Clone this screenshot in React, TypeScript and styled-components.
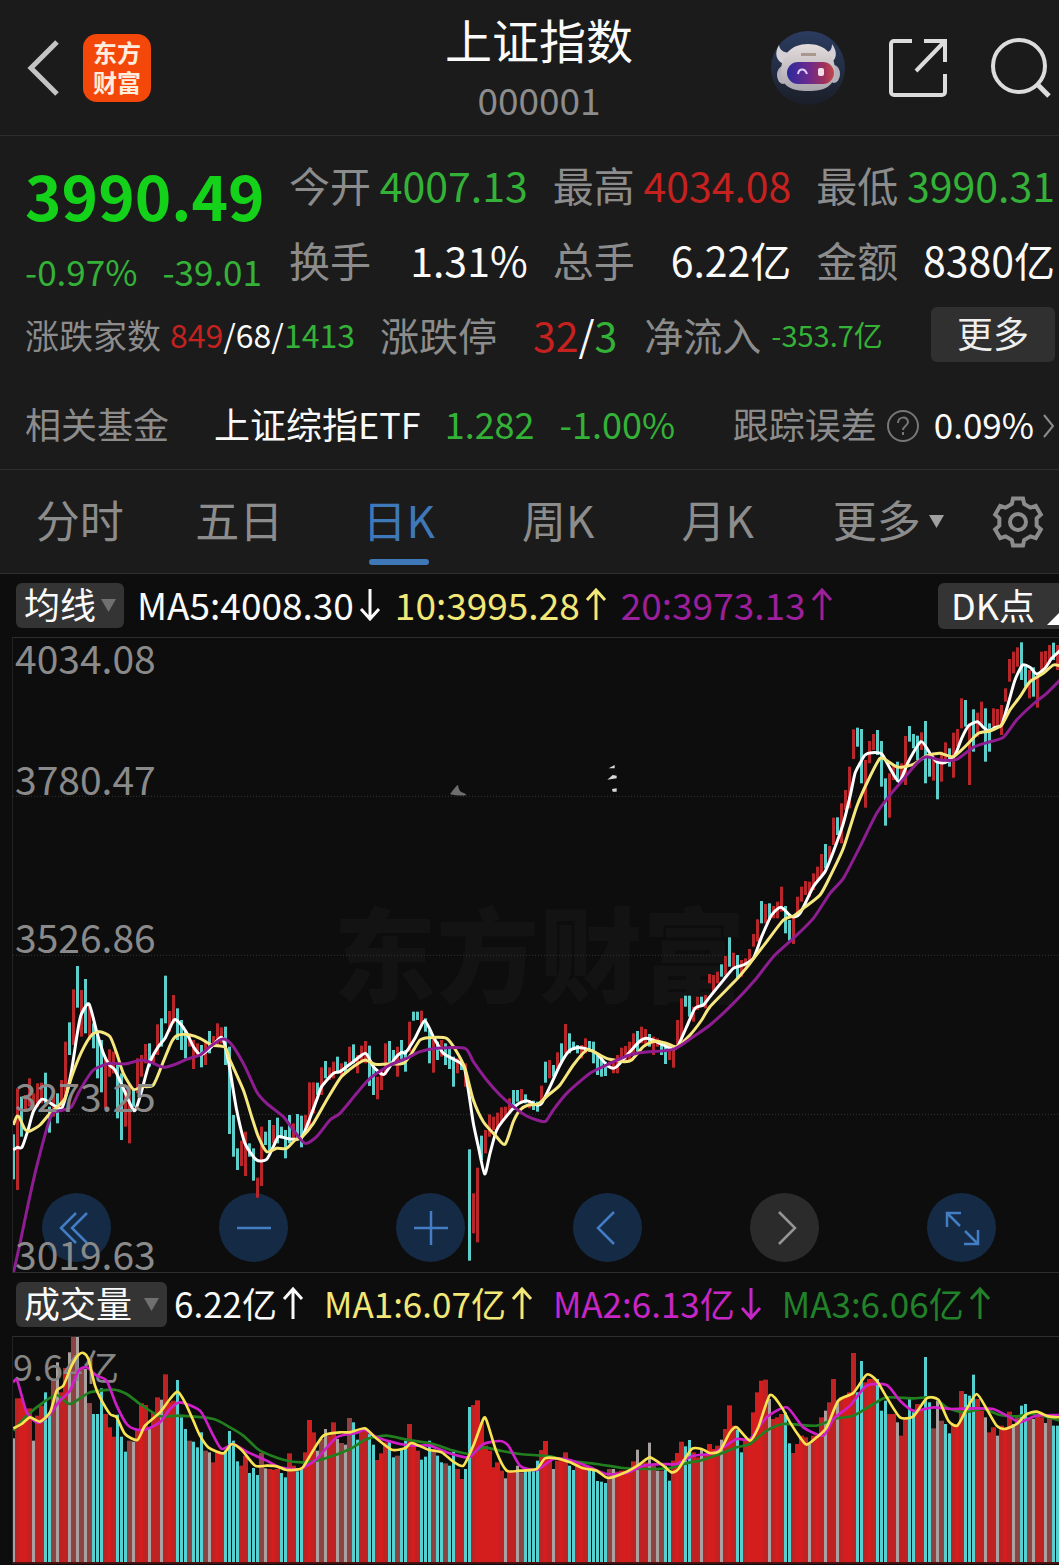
import React from "react";
import styled, { createGlobalStyle } from "styled-components";

const c = {
  panel: "#1b1b1b",
  chart: "#0d0d0d",
  line: "#2e2e2e",
  muted: "#8c8c8c",
  white: "#fafafa",
  green: "#34b238",
  bright: "#14d219",
  red: "#c4211f",
  blue: "#3f78b8",
  yellow: "#f2e877",
  purple: "#9c1f9c",
  magenta: "#c626c6",
  forest: "#22822a",
  cyan: "#5ccfca",
};

const GlobalStyle = createGlobalStyle`
  *, *::before, *::after { box-sizing: border-box; }
  body {
    margin: 0;
    background: ${c.chart};
    color: ${c.white};
    font-family: "Noto Sans CJK SC", "Noto Sans", sans-serif;
  }
  button {
    font: inherit;
    color: inherit;
    background: none;
    border: 0;
    padding: 0;
    cursor: pointer;
  }
  a { color: inherit; text-decoration: none; }
  h1, p, dl, dd, dt { margin: 0; font-weight: 400; }
  svg { display: block; }
`;

/* ---------- layout ---------- */

const Page = styled.main`
  overflow: hidden;
`;

const Header = styled.header`
  display: grid;
  grid-template-columns: 1fr auto 1fr;
  align-items: center;
  height: 136px;
  padding: 0 8px 0 27px;
  background: ${c.panel};
  border-bottom: 1px solid ${c.line};
`;

const HeaderLeft = styled.div`
  display: flex;
  align-items: center;
  gap: 24px;
`;

const HeaderRight = styled.div`
  display: flex;
  align-items: center;
  justify-content: flex-end;
  gap: 44px;
`;

const TitleBlock = styled.div`
  text-align: center;
`;

const Title = styled.h1`
  font-size: 47px;
  line-height: 62px;
`;

const Code = styled.p`
  font-size: 37px;
  line-height: 58px;
  color: ${c.muted};
`;

const Logo = styled.a`
  width: 68px;
  height: 68px;
  padding: 3px 9px 5px 10px;
  border-radius: 14px;
  background: #f4480a;
  color: #ffeedd;
  font-size: 24px;
  font-weight: 700;
  line-height: 30px;
`;

const Quote = styled.section`
  padding: 11px 4px 18px 25px;
  background: ${c.panel};
  border-bottom: 1px solid ${c.line};
`;

const QuoteTop = styled.div`
  display: flex;
  height: 150px;
`;

const PriceBlock = styled.div`
  flex: 0 0 264px;
  padding-top: 9px;
  color: ${c.green};
`;

const Price = styled.p`
  font-size: 62px;
  line-height: 76px;
  font-weight: 700;
  color: ${c.bright};
`;

const Change = styled.p`
  display: flex;
  gap: 25px;
  margin-top: 19px;
  font-size: 35px;
  line-height: 40px;
`;

const Stats = styled.dl`
  flex: 1;
  display: grid;
  grid-template-columns: repeat(3, 1fr);
  column-gap: 25px;
`;

const Stat = styled.div`
  display: flex;
  justify-content: space-between;
  font-size: 41px;
  line-height: 75px;
  white-space: nowrap;
`;

const Label = styled.dt`
  color: ${c.muted};
`;

const Value = styled.dd<{ $color?: string }>`
  color: ${(p) => p.$color ?? c.white};
`;

const Row = styled.div<{ $top: number }>`
  display: flex;
  align-items: center;
  height: 55px;
  margin-top: ${(p) => p.$top}px;
  white-space: nowrap;
`;

const Text = styled.span<{ $size: number; $color?: string; $left?: number }>`
  font-size: ${(p) => p.$size}px;
  line-height: 55px;
  color: ${(p) => p.$color ?? c.white};
  margin-left: ${(p) => p.$left ?? 0}px;
`;

const MoreButton = styled.button`
  width: 124px;
  height: 55px;
  padding-bottom: 4px;
  margin-left: auto;
  border-radius: 6px;
  background: #303030;
  color: #eeeeee;
  font-size: 36px;
  line-height: 51px;
`;

const FundLink = styled.a`
  display: flex;
`;

const ErrorGroup = styled.div`
  display: flex;
  align-items: center;
  gap: 9px;
  margin-left: auto;

  svg { margin-top: 5px; }
`;

const Tabs = styled.nav`
  display: grid;
  grid-template-columns: repeat(6, 1fr) 102px;
  height: 104px;
  background: ${c.panel};
  border-bottom: 1px solid ${c.line};
`;

const Tab = styled.button<{ $active?: boolean }>`
  display: flex;
  flex-direction: column;
  align-items: center;
  padding-top: 16px;
  font-size: 44px;
  line-height: 66px;
  color: ${(p) => (p.$active ? c.blue : c.muted)};

  &::after {
    content: "";
    width: 60px;
    height: 6px;
    margin-top: 7px;
    border-radius: 3px;
    background: ${(p) => (p.$active ? c.blue : "transparent")};
  }
`;

const TabMore = styled(Tab)`
  flex-direction: row;
  align-items: flex-start;
  justify-content: center;
  gap: 8px;
  padding-left: 22px;

  &::after { display: none; }
  svg { margin-top: 29px; }
`;

const GearButton = styled.button`
  display: grid;
  place-items: center;
  padding-left: 20px;
`;

const Legend = styled.div`
  display: flex;
  align-items: center;
  height: 63px;
  padding-left: 16px;
  white-space: nowrap;
`;

const Picker = styled.button<{ $width: number }>`
  display: flex;
  align-items: center;
  justify-content: space-between;
  width: ${(p) => p.$width}px;
  height: 45px;
  padding: 0 8px;
  border-radius: 6px;
  background: #343434;
  font-size: 36px;
  line-height: 41px;

  span { padding-bottom: 4px; }
`;

const Averages = styled.div<{ $gap: number; $left: number; $size: number }>`
  display: flex;
  gap: ${(p) => p.$gap}px;
  margin-left: ${(p) => p.$left}px;
  font-size: ${(p) => p.$size}px;
`;

const Average = styled.span<{ $color: string }>`
  display: flex;
  align-items: center;
  gap: 5px;
  padding-bottom: 4px;
  line-height: 50px;
  color: ${(p) => p.$color};
`;

const DKButton = styled.button`
  display: flex;
  align-items: flex-end;
  justify-content: space-between;
  width: 121px;
  height: 46px;
  margin-left: auto;
  padding: 0 0 4px 13px;
  border-radius: 6px 0 0 6px;
  background: #343434;
  font-size: 36px;
  line-height: 42px;
`;

const Plot = styled.section<{ $height: number }>`
  position: relative;
  height: ${(p) => p.$height}px;
  margin-left: 12px;
  border-top: 1px solid ${c.line};
  border-left: 1px solid #222222;
`;

const PricePlot = styled(Plot)`
  border-bottom: 1px solid ${c.line};
`;

const Canvas = styled.svg`
  position: absolute;
  inset: 0;
  width: 100%;
  height: 100%;
  pointer-events: none;
`;

const Watermark = styled.div`
  position: absolute;
  inset: 0 30% 10px 0;
  display: grid;
  align-items: center;
  justify-content: end;
  font-size: 103px;
  font-weight: 900;
  color: #131313;
`;

const Controls = styled.div`
  position: absolute;
  left: 29px;
  right: 63px;
  bottom: 10px;
  display: flex;
  justify-content: space-between;
`;

const RoundButton = styled.button<{ $off?: boolean }>`
  display: grid;
  place-items: center;
  width: 69px;
  height: 69px;
  border-radius: 50%;
  background: ${(p) => (p.$off ? "#2b2b2b" : "#152a44")};
  color: ${(p) => (p.$off ? "#969696" : "#437dc4")};
`;

const Scale = styled.div`
  position: absolute;
  inset: 0;
  display: grid;
  grid-template-rows: repeat(4, 1fr);
  padding-left: 2px;
  font-size: 39px;
  line-height: 38px;
  color: #8a8a8a;
  pointer-events: none;
`;

const ScaleRow = styled.div`
  display: flex;
  flex-direction: column;
  justify-content: flex-end;

  &:first-child { justify-content: space-between; }
`;

const VolumeScale = styled.div`
  position: absolute;
  top: 0;
  left: 0;
  font-size: 36px;
  line-height: 56px;
  color: #858585;
`;

/* ---------- chart data ---------- */

type Bar = { top: number; bottom: number; up: boolean };

// "top-bottom" followed by u (rise) or d (fall); base shifts a block of sessions.
const readCandles = (base: number, text: string): Bar[] =>
  text.trim().split(/\s+/).map((item) => {
    const [top, bottom] = item.slice(0, -1).split("-").map(Number);
    return { top: top + base, bottom: bottom + base, up: item.endsWith("u") };
  });

const readVolumes = (base: number, text: string): Bar[] =>
  text.trim().split(/\s+/).map((item) => ({
    top: parseInt(item, 10) + base,
    bottom: 678,
    up: item.endsWith("u"),
  }));

const candles: Bar[] = [
  ...readCandles(879, `
    613-748d 475-780u 500-620d 495-545u 445-530u 490-545u 460-530u 458-520u 428-520d 530-608d
    480-560u 490-580d 450-545u 335-500u 277-375d 178-345u 108-233d 180-320u 147-310d 225-330u
    280-355d 300-445d 330-487d 385-535u 358-440u 365-430u 400-565d 430-630d 480-590u 465-640u
    480-530d 385-490u 375-440u 342-400u 340-410d 370-400u 283-375u 265-350d 137-280d 243-305u
    195-280u 235-330d 270-360d 300-385d 310-350u 330-417u 340-375u 345-412d 335-405u 303-370d
    318-350u 280-350u 292-340u 290-405d 350-612d 555-680d 655-720d 632-708u 605-738u 640-680d
    655-752d 743-803u 590-768u 605-645d 570-660d 585-640u 563-640d 590-625d 600-685d 555-640d
    580-630u 552-620d 557-652d 555-600u 457-600u 457-550u 458-495d 412-495u 393-445d 412-450u
    395-445u 380-430d 400-440u 395-430d 350-405u 343-400d 375-430u 347-395u 333-400u 347-468d
    400-495d 440-508u 420-480u 340-435u 333-400d 360-405d 350-440u 330-400d 360-425d 275-365u
    245-272d 245-270d 242-290u 265-305d 300-400d 320-428u 335-390d 330-380u 340-405d 355-417d
    380-470d 385-430u 395-420d 400-470u 658-992d 790-910u 713-937u 617-690d 600-670u 553-620u
    560-600u 548-600u 532-580u 530-560u 505-550u 480-540d 480-515d 477-520u 493-520d 510-535u
    512-540d 515-545d 467-520u 395-458d 390-445u 405-440d 367-420u 340-395d 282-370u 310-370d
    335-360d 345-370d 345-385u 325-370u 333-365d 335-400d 370-435d 385-440d 395-438d 395-410u
    385-430u 375-430u 353-395u 348-395u 335-390u 310-370u 303-365d 290-340u 297-345u 312-350d
    320-375u 325-350u 335-375d 340-402d 345-390u 355-413u 270-345u 205-330u 197-230d 197-260d
    230-275u 200-240u 200-230d 195-235u`),
  ...readCandles(-21, `
    1032-1060u 1035-1090u 1025-1060u 1003-1040d 978-1035u 922-1010d 968-1010u 975-1045d
    990-1040u 985-1010u 957-1005u 912-950u 868-935u 813-880d 822-880u 820-870d 828-865u 815-865u
    770-845u 828-910d 870-932d 860-942u 800-850u 770-815u 753-795u 755-800u 730-780u 710-750u
    672-740u 642-715d 648-690u 563-645u 562-615d 520-640u 480-540u 410-535u 298-387u 293-350d
    297-460d 390-533u 333-400u 312-360u 300-375d 333-470d 445-587d 430-563u 405-450u 395-455d
    400-455u 318-465u 288-335d 312-355d 317-390d 307-360u 273-460d 375-440d 380-452u 390-508d
    365-455u 337-390u 355-410d 308-443u 297-350u 205-295u 210-290d 280-465u 238-365d 248-320u
    215-285u 235-395d 280-365d 235-290u 237-290u 225-315u 175-215u 87-155u 65-130u 52-110u
    37-150d 105-170d 120-205u 112-200d 130-233u 65-130u 63-115u 45-100u 38-90d 45-120u`),
];

const volumes: Bar[] = [
  ...readVolumes(-201, `
    508d 388u 388u 420u 418u 515d 440u 410u 370d 430d 330u 280d 370u 297u 250d 201u 201d 300u 300d
    402u 435d 435d 358d 435u 475u 503u 437d 503d 548d 515u 518d 480u 403u 408u 480d 430u 385u 392d
    316u 400u 395u 333d 445d 480d 515u 518d 535d 490d 545u 550d 580u 545u 550u 545d 486d 515d 577d
    590u 560u 612d 597d 618d 552u 598d 600u 602u 600u 612d 625d 553u 590u 607d 598d 550u 453u 490u
    545d 510u 480d 500u 460u 510d 522u 527d 447u 460d 512d 487u 480u 495d 527d 573u 553u 520u 515d
    565d 560u 540d 515d 465u 520u 545u 572d 563d 515d 540u 560d 580d 583u 590d 548d 600u 630u 600d
    414d 408u 394u 460u 530u 545u 595u 580u 605u 628d 605u 605u 590d 610u 603d 603d 603d 575d 543u
    516u 565u 600d 575u 575u 550u 590d 603d 580u 590u 590u 600d 603d 636d 638d 642d 600u 600d 608u
    605u 605u 605u 577u 542d 590u 580u 521d 590u 605d 605u 590d 635d 575u 552u 518u 532d 513d 550u
    565u 540d 555u`),
  ...readVolumes(-471, `
    795u 810u 800u 782d 750u 679u 740u 752d 820d 780u 780u 700u 640u 605u 602u 660d 720u 715u 705u
    700d 793d 822u 795u 770u 775u 795d 770u 770u 715u 695d 670u 600u 665d 655u 655u 640u 522u 640d
    546d 610u 600u 600u 600d 695d 665d 705u 705u 730d 770u 715u 658d 700d 675u 690u 534d 670d 748u
    665d 725u 735d 763d 735u 735u 636u 645d 650d 587d 660u 695u 715d 760u 745u 770d 740u 745u 698u
    735d 715u 680d 675d 715u 720d 705u 715u 732d 710u 740d 740d`),
];

type Point = [number, number];

const readPoints = (dx: number, dy: number, text: string): Point[] =>
  text.trim().split(/\s+/).map((pair) => {
    const [x, y] = pair.split(",").map(Number);
    return [x + dx, y + dy];
  });

// Catmull-Rom spline with a low tension, so that sharp turns stay sharp.
const curve = (points: Point[]): string =>
  points.reduce((path, [x, y], i) => {
    if (i === 0) return `M${x} ${y}`;
    const [x0, y0] = points[Math.max(i - 2, 0)];
    const [x1, y1] = points[i - 1];
    const [x3, y3] = points[Math.min(i + 1, points.length - 1)];
    const k = 9;
    return `${path}C${x1 + (x - x0) / k} ${y1 + (y - y0) / k} ${x - (x3 - x1) / k} ${y - (y3 - y1) / k} ${x} ${y}`;
  }, "");

const priceLines = [
  {
    color: "#ffffff",
    points: [
      ...readPoints(-36, 879, "40,660 52,652 66,652 84,600 100,545 125,508 145,515 160,525 185,535 200,490 215,420 232,310 243,255 267,222 290,305 310,370 328,405 345,420 370,475 402,542 420,500 448,400 475,350 495,325 522,270 540,280 560,308 580,350 602,375 630,355 663,322 675,345 690,420 710,540 735,640 770,690 800,688 820,650 835,620 860,625 885,628 905,622 920,590 950,510 965,470 1000,430 1020,425"),
      ...readPoints(984, 879, "40,395 77,370 100,410 132,433 165,385 185,367 197,368 225,325 254,272 280,320 310,370 345,390 372,410 385,480 400,580 415,650 434,732 450,670 470,600 500,558 530,525 560,512 590,525 605,520 630,470 660,405 685,365 710,353 745,358 770,370 800,405 820,415 835,405 870,365 900,333 920,325 945,333 970,345 1000,357 1015,345 1040,290 1065,235 1090,225 1110,200"),
      ...readPoints(2064, -21, "72,1048 100,1015 130,1005 160,985 185,920 215,855 243,832 275,860 300,850 340,770 375,725 400,665 430,580 450,500 465,430 480,400 495,375 515,368 545,372 570,415 598,455 625,395 663,335 690,370 710,395 735,398 765,375 785,325 805,288 832,275 850,292 868,303 885,292 905,285 925,220 945,150 968,105 990,112 1010,132 1035,115 1055,85 1080,62"),
    ],
  },
  {
    color: "#f6e77e",
    points: [
      ...readPoints(-36, 879, "40,585 50,560 58,562 75,598 90,603 120,585 150,550 175,528 195,505 215,440 245,365 275,315 300,305 330,320 350,370 370,430 400,478 425,470 460,465 490,395 515,335 535,315 570,315 600,325 635,345 675,352 690,390 730,480 755,560 775,620 800,665 830,655 860,655 885,630 905,622 940,580 980,510 1020,445"),
      ...readPoints(984, 879, "15,430 40,410 75,390 105,403 140,402 190,400 215,370 240,330 265,323 320,325 350,365 375,415 400,510 430,575 465,615 495,643 520,575 540,540 565,525 595,522 625,495 660,465 700,405 740,360 765,367 800,385 850,395 875,390 910,350 945,333 980,340 1010,350 1050,315 1085,270 1110,230"),
      ...readPoints(2064, -21, "110,1048 150,1000 200,935 250,870 280,858 310,835 360,795 390,740 430,655 470,530 505,450 540,385 565,395 595,412 640,403 680,378 720,370 760,380 800,345 835,310 870,303 905,285 930,240 960,200 990,155 1030,130 1060,105 1080,107"),
    ],
  },
  {
    color: "#8f1d92",
    points: [
      ...readPoints(-36, 879, "40,1030 60,940 85,820 110,710 145,580 160,548 190,540 215,530 240,480 280,420 330,400 375,402 425,390 455,398 490,412 520,405 560,388 600,375 630,350 663,328 680,330 700,350 735,410 770,485 800,520 850,560 880,600 915,640 950,620 990,570"),
      ...readPoints(984, 879, "0,550 50,490 90,445 150,405 200,385 240,365 290,355 375,355 400,395 440,450 480,495 520,530 560,558 600,573 618,573 640,540 680,490 750,430 800,405 860,378 910,367 1000,358 1060,320 1110,285"),
      ...readPoints(2064, -21, "100,1120 165,1050 220,980 280,925 340,865 390,790 430,745 480,650 530,550 570,495 600,460 650,400 680,380 720,390 770,388 820,352 860,338 910,322 950,270 1000,222 1040,190 1080,150"),
    ],
  },
];

const volumeLines = [
  {
    color: "#217f1f",
    points: [
      ...readPoints(-36, -201, "40,485 80,440 130,400 170,378 210,405 270,370 340,362 380,375 420,405 480,442 540,440 640,450 690,475 730,500 780,545 850,572 910,580 970,570 1050,540"),
      ...readPoints(1014, -201, "50,510 110,500 170,512 250,525 300,542 360,555 400,535 450,545 510,555 600,562 650,575 740,585 820,597 880,600 960,597 1020,580"),
      ...readPoints(2064, -471, "0,845 60,825 110,805 150,795 200,755 250,735 350,740 400,720 460,710 520,675 560,655 640,658 700,655 740,685 790,700 850,690 900,708 950,712 1000,705 1080,725"),
    ],
  },
  {
    color: "#d01fc8",
    points: [
      ...readPoints(-36, -201, "40,340 52,335 80,430 115,462 150,435 180,395 210,365 235,305 260,295 290,320 320,335 350,410 380,465 410,482 440,480 480,460 510,420 540,400 600,425 640,500 665,540 700,525 740,548 800,575 840,595 900,600 950,570 1010,505"),
      ...readPoints(1014, -201, "20,492 45,482 80,505 150,525 190,530 240,530 290,550 345,565 365,560 400,525 450,516 475,530 510,590 560,603 610,570 660,573 720,595 770,615 830,612 880,590 940,585 980,585 1030,560"),
      ...readPoints(2064, -471, "30,825 70,805 110,780 150,780 200,715 260,685 310,745 370,770 400,720 450,680 500,620 560,618 600,665 640,695 700,685 750,690 820,688 880,690 930,715 960,730 1010,710 1080,708"),
    ],
  },
  {
    color: "#fae352",
    points: [
      ...readPoints(-36, -201, "40,478 65,465 90,445 120,458 150,430 170,365 190,350 215,290 235,258 250,252 265,270 285,350 300,385 330,435 350,445 375,495 412,513 435,470 480,430 510,390 533,368 555,400 580,455 600,500 625,535 670,553 695,525 725,543 765,590 800,590 830,592 860,603 905,598 930,560 970,500 1020,490"),
      ...readPoints(1014, -201, "0,490 45,478 75,505 125,542 165,538 185,522 235,542 275,550 310,578 340,590 370,530 400,450 410,455 440,550 470,605 510,605 560,600 585,568 620,568 660,580 700,598 740,605 775,627 830,608 870,585 900,565 940,590 965,610 985,600 1025,540 1055,540"),
      ...readPoints(2064, -471, "30,822 60,815 90,760 110,745 150,785 175,745 210,648 245,685 270,730 300,775 320,797 350,775 380,745 415,665 460,642 500,587 530,605 560,655 600,715 640,712 680,658 715,662 745,725 772,740 800,690 830,645 860,690 890,740 915,750 950,735 980,705 1010,698 1045,712 1080,715"),
    ],
  },
];

const STEP = 12;

/* ---------- drawings ---------- */

const PriceChart = () => (
  <Canvas viewBox="3 3 3138 1902" preserveAspectRatio="none" aria-hidden="true">
    {[478, 955, 1432].map((y) => (
      <path key={y} d={`M3 ${y}H3141`} stroke="#353535" strokeWidth={3} strokeDasharray="3 6" />
    ))}
    <path d="M1314 472q18-26 24-28q2 22 18 24l8 6q-20 4-50-2z" fill="#6e6e6e" />
    <path d="M1790 394l18-10v10zM1786 428l16-14 12 2v8zM1800 456l14-2v10h-12z" fill="#d8d8d8" />
    {candles.map((bar, i) => (
      <rect
        key={i}
        x={STEP * i}
        y={bar.top}
        width={9}
        height={bar.bottom - bar.top}
        fill={bar.up ? "#b9262a" : c.cyan}
      />
    ))}
    {priceLines.map((line) => (
      <path
        key={line.color}
        d={curve(line.points)}
        fill="none"
        stroke={line.color}
        strokeWidth={9}
        strokeLinejoin="round"
      />
    ))}
  </Canvas>
);

const volumeColor = (bar: Bar, i: number) => {
  const before = volumes[i - 1]?.up ?? true;
  const after = volumes[i + 1]?.up ?? true;
  if (bar.up) return before && after ? "#d41d1d" : before || after ? "#be2222" : "#8c4442";
  return before && after ? "#a9a19f" : "#55d0d0";
};

const VolumeChart = () => (
  <Canvas viewBox="3 3 3138 681" preserveAspectRatio="none" aria-hidden="true">
    {volumes.map((bar, i) => (
      <rect
        key={i}
        x={bar.up ? STEP * i - 3 : STEP * i}
        y={bar.top}
        width={bar.up ? 15 : 9}
        height={bar.bottom - bar.top}
        fill={volumeColor(bar, i)}
      />
    ))}
    <path d="M3 681H3141" stroke="#5e1515" strokeWidth={4} />
  </Canvas>
);

const VolumeLines = () => (
  <Canvas viewBox="3 3 3138 681" preserveAspectRatio="none" aria-hidden="true">
    {volumeLines.map((line) => (
      <path
        key={line.color}
        d={curve(line.points)}
        fill="none"
        stroke={line.color}
        strokeWidth={8}
        strokeLinejoin="round"
      />
    ))}
  </Canvas>
);

const Arrow = ({ up }: { up?: boolean }) => (
  <svg width="22" height="34" viewBox="0 0 22 34" fill="none" stroke="currentColor" strokeWidth="3">
    <path d={up ? "M11 33V4M2 13l9-10 9 10" : "M11 2v29M2 22l9 10 9-10"} />
  </svg>
);

const Triangle = ({ color }: { color: string }) => (
  <svg width="15" height="13" viewBox="0 0 30 26">
    <path d="M0 0h30L15 26z" fill={color} />
  </svg>
);

const Robot = () => (
  <svg width="74" height="74" viewBox="0 0 74 74">
    <defs>
      <linearGradient id="sky" x1="0" y1="0" x2="0" y2="1">
        <stop offset="0" stopColor="#2b3c60" />
        <stop offset="1" stopColor="#1b1e28" />
      </linearGradient>
      <linearGradient id="shell" x1="0" y1="0" x2="0" y2="1">
        <stop offset="0" stopColor="#e3dcdc" />
        <stop offset="1" stopColor="#a9a5ae" />
      </linearGradient>
      <linearGradient id="visor" x1="0" y1="0" x2="1" y2="0">
        <stop offset="0" stopColor="#2b2a9c" />
        <stop offset="0.45" stopColor="#6a2a8e" />
        <stop offset="0.8" stopColor="#a0305a" />
        <stop offset="1" stopColor="#c04a4c" />
      </linearGradient>
    </defs>
    <circle cx="37" cy="37" r="37" fill="url(#sky)" />
    <path d="M8 14C3 22 5 30 13 33l10-12C14 23 9 20 8 14z" fill="#d5d0d6" />
    <path d="M61 13c6 8 5 16-3 20l-9-12c8 2 12-1 12-8z" fill="#d5d0d6" />
    <ellipse cx="12" cy="44" rx="6" ry="9" fill="#b5b1bc" />
    <ellipse cx="63" cy="43" rx="6" ry="9" fill="#b5b1bc" />
    <path d="M37 13c17 0 27 11 27 27 0 15-10 20-27 20S10 55 10 41c0-17 10-28 27-28z" fill="url(#shell)" />
    <path d="M30 22h15v3H30z" fill="#a8988f" />
    <rect x="16" y="31" width="47" height="22" rx="11" fill="url(#visor)" />
    <path d="M27 43c1-6 7-6 9 0" fill="none" stroke="#dcd0ff" strokeWidth="2" />
    <rect x="47" y="37" width="6" height="8" rx="2" fill="#f3dde6" />
  </svg>
);

const ShareIcon = () => (
  <svg width="58" height="60" viewBox="0 0 58 60" fill="none" stroke="#dcdcdc" strokeWidth="4">
    <path d="M23 3H5a3 3 0 0 0-3 3v48a3 3 0 0 0 3 3h48a3 3 0 0 0 3-3V36M35 3h21v21M56 3L27 33" />
  </svg>
);

const SearchIcon = () => (
  <svg width="60" height="60" viewBox="0 0 60 60" fill="none" stroke="#dcdcdc" strokeWidth="4">
    <circle cx="28" cy="28" r="26" />
    <path d="M46 46l12 12" strokeWidth="5" />
  </svg>
);

const polar = (radius: number, degrees: number) => {
  const a = (degrees * Math.PI) / 180;
  return `${26 + radius * Math.sin(a)} ${26 - radius * Math.cos(a)}`;
};

const gearPath = `M${[0, 60, 120, 180, 240, 300]
  .flatMap((a) => [polar(19, a - 19), polar(24, a - 12), polar(24, a + 12), polar(19, a + 19)])
  .join("L")}Z`;

const Gear = () => (
  <svg width="52" height="52" viewBox="0 0 52 52" fill="none" stroke={c.muted} strokeWidth="4">
    <path d={gearPath} />
    <circle cx="26" cy="26" r="8" />
  </svg>
);

const Glyph = ({ d }: { d: string }) => (
  <svg width="36" height="36" viewBox="0 0 36 36" fill="none" stroke="currentColor" strokeWidth="2.5">
    <path d={d} />
  </svg>
);

const controls = [
  { name: "最早", d: "M17 3L2 18l15 15M28 3L13 18l15 15" },
  { name: "缩小", d: "M1 18h34" },
  { name: "放大", d: "M1 18h34M18 1v34" },
  { name: "向左", d: "M24 2L8 18l16 16" },
  { name: "向右", d: "M12 2l16 16-16 16", off: true },
  { name: "全屏", d: "M17 3H3v14M3 3l13 13M34 20v14H20M34 34L21 21" },
];

/* ---------- page ---------- */

export default function App() {
  return (
    <>
      <GlobalStyle />
      <Page>
        <Header>
          <HeaderLeft>
            <button aria-label="返回">
              <svg width="32" height="56" viewBox="0 0 32 56" fill="none" stroke="#c4c4c4" strokeWidth="5">
                <path d="M30 2L4 28l26 26" />
              </svg>
            </button>
            <Logo href="#home">东方财富</Logo>
          </HeaderLeft>
          <TitleBlock>
            <Title>上证指数</Title>
            <Code>000001</Code>
          </TitleBlock>
          <HeaderRight>
            <button aria-label="助手"><Robot /></button>
            <button aria-label="分享"><ShareIcon /></button>
            <button aria-label="搜索"><SearchIcon /></button>
          </HeaderRight>
        </Header>

        <Quote>
          <QuoteTop>
            <PriceBlock>
              <Price>3990.49</Price>
              <Change>
                <span>-0.97%</span>
                <span>-39.01</span>
              </Change>
            </PriceBlock>
            <Stats>
              <Stat><Label>今开</Label><Value $color={c.green}>4007.13</Value></Stat>
              <Stat><Label>最高</Label><Value $color={c.red}>4034.08</Value></Stat>
              <Stat><Label>最低</Label><Value $color={c.green}>3990.31</Value></Stat>
              <Stat><Label>换手</Label><Value>1.31%</Value></Stat>
              <Stat><Label>总手</Label><Value>6.22亿</Value></Stat>
              <Stat><Label>金额</Label><Value>8380亿</Value></Stat>
            </Stats>
          </QuoteTop>
          <Row $top={10}>
            <Text $size={34} $color={c.muted}>涨跌家数</Text>
            <Text $size={32} $color={c.red} $left={9}>849</Text>
            <Text $size={32}>/68/</Text>
            <Text $size={32} $color={c.green}>1413</Text>
            <Text $size={39} $color={c.muted} $left={25}>涨跌停</Text>
            <Text $size={41} $color={c.red} $left={36}>32</Text>
            <Text $size={41}>/</Text>
            <Text $size={41} $color={c.green}>3</Text>
            <Text $size={39} $color={c.muted} $left={27}>净流入</Text>
            <Text $size={29} $color={c.green} $left={10}>-353.7亿</Text>
            <MoreButton>更多</MoreButton>
          </Row>
          <Row $top={34}>
            <Text $size={36} $color={c.muted}>相关基金</Text>
            <FundLink href="#etf">
              <Text $size={36} $left={45}>上证综指ETF</Text>
              <Text $size={36} $color={c.green} $left={24}>1.282</Text>
              <Text $size={36} $color={c.green} $left={25}>-1.00%</Text>
            </FundLink>
            <ErrorGroup>
              <Text $size={36} $color={c.muted}>跟踪误差</Text>
              <svg width="34" height="34" viewBox="0 0 34 34" fill="none" stroke="#777777" strokeWidth="2">
                <circle cx="17" cy="17" r="15" />
                <path d="M12 14c0-7 10-7 10-1 0 4-5 4-5 8M17 23v3" />
              </svg>
              <Text $size={35} $left={5}>0.09%</Text>
              <svg width="12" height="26" viewBox="0 0 12 26" fill="none" stroke={c.muted} strokeWidth="2">
                <path d="M1 2l9 11-9 11" />
              </svg>
            </ErrorGroup>
          </Row>
        </Quote>

        <Tabs>
          <Tab>分时</Tab>
          <Tab>五日</Tab>
          <Tab $active>日K</Tab>
          <Tab>周K</Tab>
          <Tab>月K</Tab>
          <TabMore>
            更多
            <Triangle color="#a0a0a0" />
          </TabMore>
          <GearButton aria-label="设置"><Gear /></GearButton>
        </Tabs>

        <Legend>
          <Picker $width={108}><span>均线</span><Triangle color="#707070" /></Picker>
          <Averages $gap={14} $left={13} $size={37}>
            <Average $color={c.white}>MA5:4008.30<Arrow /></Average>
            <Average $color={c.yellow}>10:3995.28<Arrow up /></Average>
            <Average $color={c.purple}>20:3973.13<Arrow up /></Average>
          </Averages>
          <DKButton>
            DK点
            <svg width="12" height="12" viewBox="0 0 12 12"><path d="M12 0v12H0z" fill="#ffffff" /></svg>
          </DKButton>
        </Legend>

        <PricePlot $height={636}>
          <Watermark>东方财富</Watermark>
          <Controls>
            {controls.map((item) => (
              <RoundButton key={item.name} aria-label={item.name} $off={item.off}>
                <Glyph d={item.d} />
              </RoundButton>
            ))}
          </Controls>
          <PriceChart />
          <Scale>
            <ScaleRow><span>4034.08</span><span>3780.47</span></ScaleRow>
            <ScaleRow><span>3526.86</span></ScaleRow>
            <ScaleRow><span>3273.25</span></ScaleRow>
            <ScaleRow><span>3019.63</span></ScaleRow>
          </Scale>
        </PricePlot>

        <Legend>
          <Picker $width={151}><span>成交量</span><Triangle color="#707070" /></Picker>
          <Averages $gap={20} $left={7} $size={35}>
            <Average $color={c.white}>6.22亿<Arrow up /></Average>
            <Average $color={c.yellow}>MA1:6.07亿<Arrow up /></Average>
            <Average $color={c.magenta}>MA2:6.13亿<Arrow /></Average>
            <Average $color={c.forest}>MA3:6.06亿<Arrow up /></Average>
          </Averages>
        </Legend>

        <Plot $height={228}>
          <VolumeChart />
          <VolumeScale>9.64亿</VolumeScale>
          <VolumeLines />
        </Plot>
      </Page>
    </>
  );
}
